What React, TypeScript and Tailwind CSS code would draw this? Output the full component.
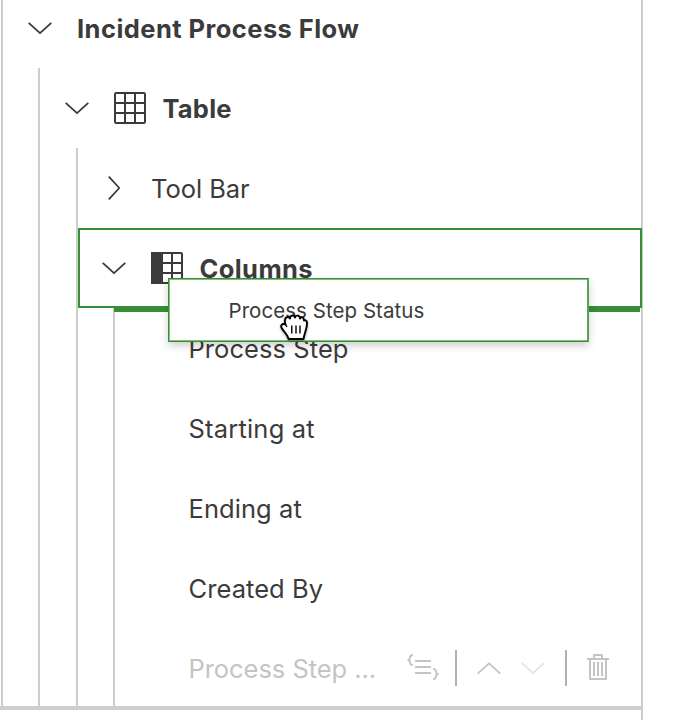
import type { ReactNode } from 'react';

const CHEVRONS = {
  down: 'M0.700 0.800L12 11.200L23.300 0.800',
  up: 'M0.700 11.700L12 1.300L23.300 11.700',
};

function Chevron({ dir = 'down', className = '' }: { dir?: 'down' | 'up'; className?: string }) {
  return (
    <svg width="24" height="12" viewBox="0 0 24 12" fill="none" stroke="currentColor" strokeWidth="1.800" strokeLinejoin="round" className={`shrink-0 overflow-visible ${className}`}>
      <path d={CHEVRONS[dir]} />
    </svg>
  );
}

function ChevronRight() {
  return (
    <svg width="13" height="24" viewBox="0 0 13 24" fill="none" stroke="currentColor" strokeWidth="1.800" strokeLinejoin="round" className="shrink-0">
      <path d="M0.800 0.700L11.300 12L0.800 23.300" />
    </svg>
  );
}

function GridIcon({ filled = false }: { filled?: boolean }) {
  return (
    <svg width="32" height="32" viewBox="0 0 32 32" fill="none" stroke="currentColor" strokeWidth="2" className="shrink-0">
      <rect x="1" y="1" width="30" height="30" rx="1.2" />
      <path d="M1 11H31M1 21H31M11 1V31M21 1V31" />
      {filled && <rect x="1" y="1" width="10" height="30" fill="currentColor" />}
    </svg>
  );
}

function BracesIcon() {
  return (
    <svg width="32" height="26" viewBox="0 0 32 26" fill="none" stroke="currentColor" strokeWidth="2" className="mb-[2px] shrink-0">
      <path d="M8 7H24M8 13H24M8 19H24" />
      <path d="M6 1C3.500 1 3 2 3 3.500C3 5 2.500 6 0.500 6C2.500 6 3 7 3 8.500C3 10 3.500 11.200 6 11.200M26 14.800C28.500 14.800 29 16 29 17.500C29 19 29.500 20 31.500 20C29.500 20 29 21 29 22.500C29 24 28.500 25.200 26 25.200" strokeWidth="1.800" />
    </svg>
  );
}

function TrashIcon() {
  return (
    <svg width="22" height="26" viewBox="0 0 22 26" fill="none" stroke="currentColor" strokeWidth="2" className="mb-[2px] shrink-0">
      <path d="M0 5H22M7 5V1H15V5M3 5V25H19V5M7 8V22M11 8V22M15 8V22" strokeLinejoin="round" />
    </svg>
  );
}

function GrabCursor() {
  return (
    <svg width="30" height="30" viewBox="0 0 30 30" className="absolute left-[111px] top-[33px] drop-shadow-[0_1px_1px_rgba(0,0,0,0.4)]">
      <path
        d="M8.500 27C8 23 4.500 20.500 2 16.500C0 13.500 2 11 5.500 12.500C4.500 9.500 4.500 5.500 7.500 5C9 4.700 9.500 5.500 10 6.500C10 3 14.500 2.500 15 5.500C15.500 2.700 19.800 3 20 6.500C21 4.500 24 5 24 8.500C25.500 7.500 27 9 27 11C27 17 25 19 23.500 27Z"
        fill="white" stroke="black" strokeWidth="1.900" strokeLinejoin="round"
      />
      <path d="M5.500 12.500L7 15M11.800 13.500V21.500M16 13.500V21.500M20 13.500V21.500" stroke="black" strokeWidth="1.400" fill="none" />
    </svg>
  );
}

function Leaf({ children }: { children: ReactNode }) {
  return <div className="flex h-20 items-center pl-[73.5px] pt-[2px]">{children}</div>;
}

export default function App() {
  return (
    <div className="h-[720px] w-[692px] overflow-hidden bg-white font-['Inter',sans-serif] text-[25.5px] leading-8 tracking-[0.07px] text-[#3b3b3b]">
      <div className="relative h-full w-[643px] border-r-2 border-[#cdcdcd]">
        <div className="ml-px h-[706px] border-l-2 border-[#cdcdcd]">
          <div className="flex h-[68px] items-start pl-[25px] pt-[13px]">
            <Chevron className="mt-[9px]" />
            <span className="ml-[25px] font-bold tracking-[0.45px]">Incident Process Flow</span>
          </div>
          <div className="ml-[35px] h-[638px] border-l-2 border-[#cdcdcd]">
            <div className="flex h-20 items-center pl-[25px]">
              <Chevron />
              <div className="ml-[25px]"><GridIcon /></div>
              <span className="ml-[16.5px] pt-[2px] font-bold tracking-[0.2px]">Table</span>
            </div>
            <div className="ml-9 h-[558px] border-l-2 border-[#cdcdcd]">
              <div className="flex h-20 items-center pl-[30px]">
                <ChevronRight />
                <span className="ml-[30px] pt-[2px] tracking-[-0.05px]">Tool Bar</span>
              </div>
              <div className="relative z-10 flex h-20 w-[564px] items-center border-2 border-[#388e34] pl-[22px]">
                <Chevron />
                <div className="ml-[25px]"><GridIcon filled /></div>
                <span className="ml-[16.5px] pt-[2px] font-bold tracking-[0.4px]">Columns</span>
                <div className="absolute -bottom-[6px] left-[34px] h-[6px] w-[526px] bg-[#388e34]" />
              </div>
              <div className="ml-[35px] h-[398px] border-l-2 border-[#cdcdcd]">
                <Leaf>Process Step</Leaf>
                <Leaf><span className="tracking-[0.2px]">Starting at</span></Leaf>
                <Leaf>Ending at</Leaf>
                <Leaf>Created By</Leaf>
                <div className="flex h-20 items-center pl-[73.5px] text-[#c4c4c4]">
                  <span className="w-[218.5px] pt-[2px] tracking-[-0.05px]">Process Step ...</span>
                  <BracesIcon />
                  <div className="ml-4 h-9 w-[2px] bg-[#b1b1b1]" />
                  <Chevron dir="up" className="ml-5" />
                  <Chevron className="ml-5 text-[#e5e5e5]" />
                  <div className="ml-5 h-9 w-[2px] bg-[#b1b1b1]" />
                  <div className="ml-5"><TrashIcon /></div>
                </div>
              </div>
            </div>
          </div>
        </div>
        <div className="h-1 bg-[#cdcdcd]" />
        <div className="absolute left-[168px] top-[278px] z-20 flex h-16 w-[421px] items-center border border-r-2 border-[#388e34] border-r-[#57a354] bg-white pl-[59.5px] pt-[2px] text-[20.5px] tracking-[0.05px] shadow-[inset_1px_1px_0_#86bb84,inset_0_-1px_0_#86bb84,0_4px_8px_rgba(0,0,0,0.18)]">
          <span>Process Step Status</span>
          <GrabCursor />
        </div>
      </div>
    </div>
  );
}
